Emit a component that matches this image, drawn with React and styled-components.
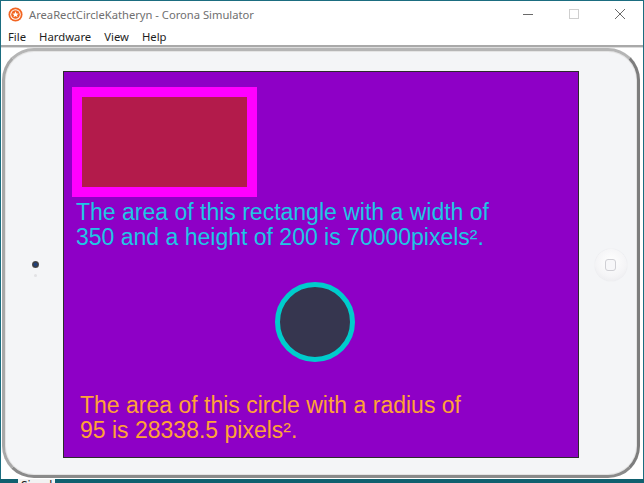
import React from 'react';
import styled, { createGlobalStyle } from 'styled-components';

const GlobalStyle = createGlobalStyle`
  html, body {
    margin: 0;
    padding: 0;
    width: 644px;
    height: 483px;
    overflow: hidden;
    background: #10606f;
  }
`;

const App = () => {
  return (
    <>
      <GlobalStyle />
      <Window>
        <TitleBar>
          <AppIcon width="15" height="15" viewBox="0 0 16 16">
            <circle cx="8" cy="8" r="7.5" fill="#f26522" />
            <circle cx="8" cy="8" r="5.6" fill="#fff" />
            <circle cx="8" cy="8" r="4.6" fill="#f26522" />
            <path d="M8 4.6 L9 7 L11.4 7.1 L9.5 8.6 L10.2 11 L8 9.6 L5.8 11 L6.5 8.6 L4.6 7.1 L7 7 Z" fill="#fff" />
          </AppIcon>
          <Title>AreaRectCircleKatheryn - Corona Simulator</Title>
          <Controls>
            <Control>
              <svg width="12" height="12" viewBox="0 0 12 12">
                <line x1="1" y1="6.5" x2="11" y2="6.5" stroke="#6a6a6a" strokeWidth="1" />
              </svg>
            </Control>
            <Control>
              <svg width="12" height="12" viewBox="0 0 12 12">
                <rect x="1.5" y="1.5" width="9" height="9" fill="none" stroke="#cfcfcf" strokeWidth="1" />
              </svg>
            </Control>
            <Control>
              <svg width="12" height="12" viewBox="0 0 12 12">
                <path d="M1 1 L11 11 M11 1 L1 11" stroke="#6a6a6a" strokeWidth="1" />
              </svg>
            </Control>
          </Controls>
        </TitleBar>
        <MenuBar>
          <MenuItem>File</MenuItem>
          <MenuItem>Hardware</MenuItem>
          <MenuItem>View</MenuItem>
          <MenuItem>Help</MenuItem>
        </MenuBar>
        <Separator />
        <Content>
          <Device>
            <SideColumn>
              <Camera />
              <Sensor />
            </SideColumn>
            <Screen>
              <Rectangle />
              <Caption color="#1fc6e4" indent={12} top={3}>
                The area of this rectangle with a width of<br />
                350 and a height of 200 is 70000pixels².
              </Caption>
              <Circle />
              <Caption color="#ffa336" indent={16} top={31}>
                The area of this circle with a radius of<br />
                95 is 28338.5 pixels².
              </Caption>
            </Screen>
            <SideColumn>
              <HomeButton>
                <HomeSquare />
              </HomeButton>
            </SideColumn>
          </Device>
        </Content>
      </Window>
      <TaskLabel>Simul</TaskLabel>
    </>
  );
};

export default App;

const Window = styled.div`
  width: 644px;
  height: 479px;
  box-sizing: border-box;
  border: 1px solid #1b6d80;
  border-bottom: none;
  background: #ffffff;
  display: flex;
  flex-direction: column;
  font-family: 'Noto Sans', 'Open Sans', sans-serif;
`;

const TitleBar = styled.div`
  height: 27px;
  display: flex;
  align-items: center;
  padding-left: 7px;
`;

const AppIcon = styled.svg`
  flex: none;
`;

const Title = styled.div`
  margin-left: 6px;
  font-size: 11.2px;
  color: #6f6f6f;
`;

const Controls = styled.div`
  margin-left: auto;
  display: flex;
  height: 100%;
`;

const Control = styled.div`
  width: 46px;
  display: flex;
  align-items: center;
  justify-content: center;
  padding-bottom: 2px;
`;

const MenuBar = styled.div`
  height: 17px;
  display: flex;
  align-items: center;
  padding-left: 0.5px;
`;

const MenuItem = styled.div`
  font-size: 11.3px;
  color: #1e1e1e;
  padding: 0 6.5px;
`;

const Separator = styled.div`
  height: 2px;
  background: #a9a9a9;
  border-bottom: 1px solid #dcdcdc;
`;

const Content = styled.div`
  flex: 1;
  padding-left: 1px;
`;

const Device = styled.div`
  width: 638px;
  height: 430px;
  box-sizing: border-box;
  border: 3px solid #9c9c9c;
  border-top-color: #b5b5b5;
  border-left-color: #a8a8a8;
  border-right-color: #7d7d7d;
  border-bottom-color: #8a8a8a;
  border-radius: 32px;
  background: #f4f5f7;
  box-shadow: inset 0 0 0 1px #e4e4e4;
  padding: 20px 0 17px;
  display: flex;
`;

const SideColumn = styled.div`
  flex: 1;
  display: flex;
  flex-direction: column;
  align-items: center;
  justify-content: center;
`;

const Camera = styled.div`
  width: 7px;
  height: 7px;
  border-radius: 50%;
  background: radial-gradient(circle, #1f3f7a 0 35%, #3b3b40 45%, #6a6a6a 100%);
  margin: 9px 0 0 2px;
`;

const Sensor = styled.div`
  width: 3px;
  height: 3px;
  border-radius: 50%;
  background: #e2e2e4;
  margin: 6px 0 0 2px;
`;

const HomeButton = styled.div`
  width: 32px;
  height: 32px;
  border-radius: 50%;
  background: radial-gradient(circle at 50% 40%, #ffffff 0%, #f4f4f6 60%, #e6e6ea 100%);
  box-shadow: 0 0 1px #d8d8dc;
  display: flex;
  align-items: center;
  justify-content: center;
  margin-left: 5px;
`;

const HomeSquare = styled.div`
  width: 9px;
  height: 10px;
  border-radius: 3px;
  border: 1px solid #cfcfd4;
  background: #f7f7f9;
`;

const Screen = styled.div`
  width: 516px;
  height: 387px;
  box-sizing: border-box;
  border: 1px solid #2b2b2b;
  background: #8e00c6;
  display: flex;
  flex-direction: column;
  align-items: flex-start;
  flex: none;
`;

const Rectangle = styled.div`
  width: 185px;
  height: 110px;
  box-sizing: border-box;
  border: 10px solid #ff00ff;
  background: #b31b4b;
  margin: 15px 0 0 8px;
`;

const Caption = styled.div`
  color: ${(p) => p.color};
  margin: ${(p) => p.top}px 0 0 ${(p) => p.indent}px;
  font-family: 'Liberation Sans', Arial, sans-serif;
  font-size: 23px;
  line-height: 25px;
`;

const Circle = styled.div`
  width: 80px;
  height: 80px;
  box-sizing: border-box;
  border-radius: 50%;
  border: 5px solid #00cccc;
  background: #36364f;
  margin: 32px 0 0 211px;
`;

const TaskLabel = styled.div`
  position: absolute;
  left: 18px;
  top: 479px;
  background: #f2f2f2;
  padding: 0 3px;
  font-family: 'Noto Sans', sans-serif;
  font-size: 12px;
  color: #222;
  line-height: 14px;
`;
